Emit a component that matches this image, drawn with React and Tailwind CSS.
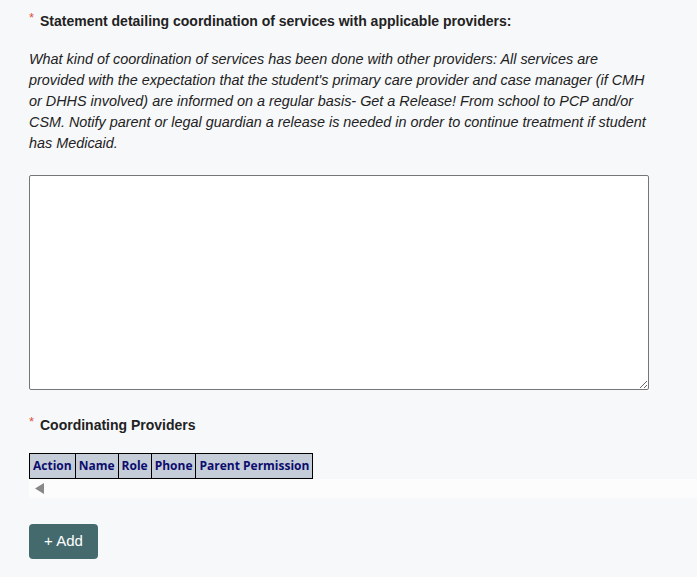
export default function App() {
  const arial = { fontFamily: '"Liberation Sans", Arial, sans-serif' };
  return (
    <div className="min-h-[577px] w-[697px] bg-[#f7f8fa] text-[#222]" style={arial}>
      <div className="pl-[29px] pt-[9px]">
        <div className="flex items-start h-[24px]">
          <span className="text-[#e0533f] text-[13px] leading-[16px] mt-[1px] w-[11px]">*</span>
          <span className="font-bold text-[14px] leading-[24px] text-[#222]">Statement detailing coordination of services with applicable providers:</span>
        </div>
        <p className="mt-[16px] w-[620px] italic text-[14.4px] leading-[21px] text-[#222]">
          What kind of coordination of services has been done with other providers: All services are provided with the expectation that the student's primary care provider and case manager (if CMH or DHHS involved) are informed on a regular basis- Get a Release! From school to PCP and/or CSM. Notify parent or legal guardian a release is needed in order to continue treatment if student has Medicaid.
        </p>
        <textarea className="mt-[21px] block w-[620px] h-[215px] bg-white border border-[#767676] rounded-[2px] outline-none" />
        <div className="flex items-start mt-[23px] h-[24px]">
          <span className="text-[#e0533f] text-[13px] leading-[16px] mt-[1px] w-[11px]">*</span>
          <span className="font-bold text-[14px] leading-[24px] text-[#222]">Coordinating Providers</span>
        </div>
        <div className="mt-[16px]">
          <table className="border-collapse" style={{ fontFamily: '"Open Sans", sans-serif' }}>
            <thead>
              <tr className="bg-[#c5ced8] text-[#0c0c6e] text-[12px] font-bold h-[25px]">
                <th className="border border-black px-[3px] font-bold">Action</th>
                <th className="border border-black px-[3px] font-bold">Name</th>
                <th className="border border-black px-[3px] font-bold">Role</th>
                <th className="border border-black px-[3px] font-bold">Phone</th>
                <th className="border border-black px-[3px] font-bold">Parent Permission</th>
              </tr>
            </thead>
          </table>
          <div className="h-[19px] bg-[#fcfcfc] flex items-center pl-[6px]">
            <svg width="10" height="11" viewBox="0 0 10 11"><polygon points="9,0 9,11 0,5.5" fill="#888888" /></svg>
          </div>
        </div>
        <button className="mt-[26px] w-[69px] h-[35px] bg-[#456a6e] rounded-[4px] text-white text-[15px]">+ Add</button>
      </div>
    </div>
  );
}
